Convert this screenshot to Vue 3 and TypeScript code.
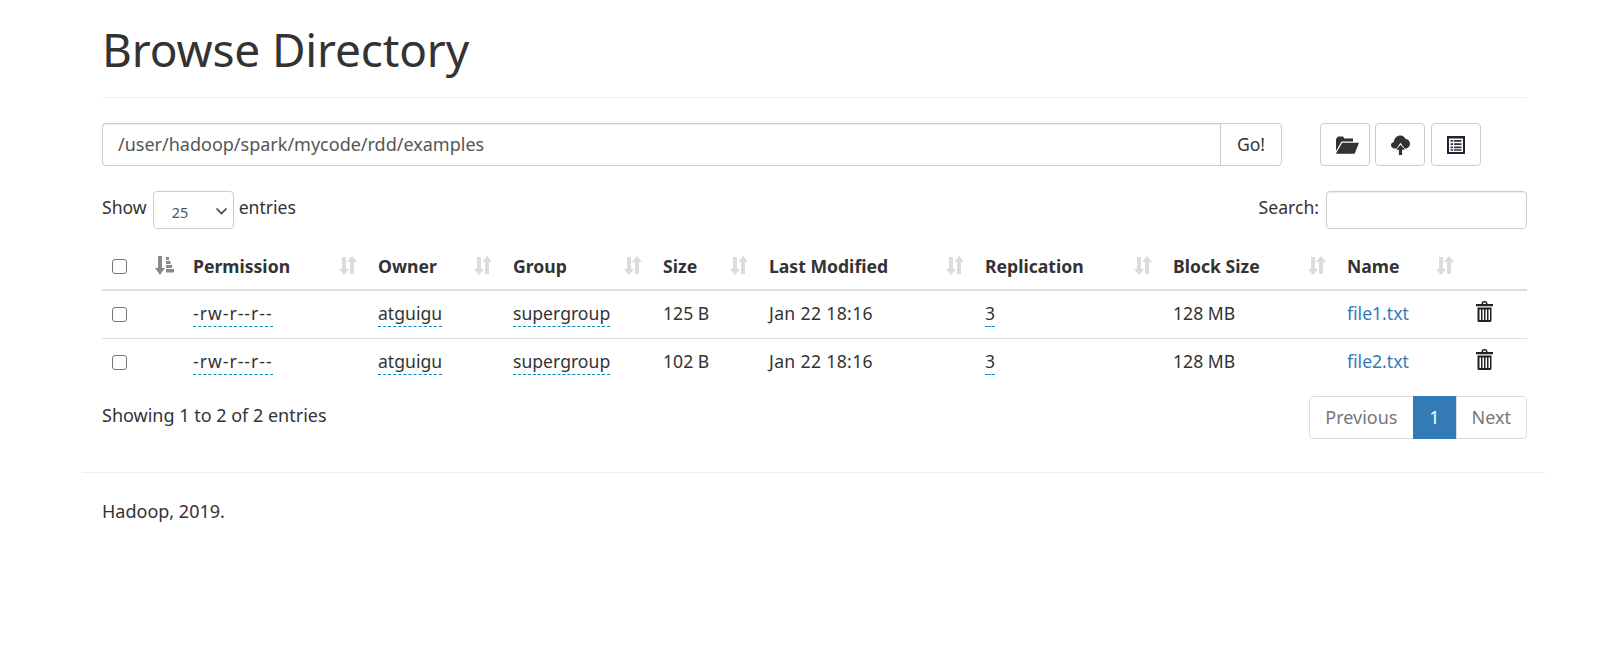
<script setup lang="ts">
interface Row { perm: string; owner: string; group: string; size: string; modified: string; repl: string; block: string; name: string }
const rows: Row[] = [
  { perm: '-rw-r--r--', owner: 'atguigu', group: 'supergroup', size: '125 B', modified: 'Jan 22 18:16', repl: '3', block: '128 MB', name: 'file1.txt' },
  { perm: '-rw-r--r--', owner: 'atguigu', group: 'supergroup', size: '102 B', modified: 'Jan 22 18:16', repl: '3', block: '128 MB', name: 'file2.txt' },
]
const heads = ['Permission', 'Owner', 'Group', 'Size', 'Last Modified', 'Replication', 'Block Size', 'Name']
</script>

<template>
  <div class="page">
    <div class="container">
      <div class="page-header"><h1>Browse Directory</h1></div>
      <div class="toolbar">
        <div class="path-group">
          <input class="path" type="text" value="/user/hadoop/spark/mycode/rdd/examples" />
          <button class="go">Go!</button>
        </div>
        <div class="tools">
          <button class="tool"><svg class="nudge" width="24" height="18" viewBox="0 0 24 18"><path fill="#333" d="M1 15V3l2-2.500h5L9.500 2.500h8.500v3H6.500zM7.200 6.800H24l-4.400 11H.8z"/></svg></button>
          <button class="tool"><svg width="19" height="20" viewBox="0 0 19 20"><path fill="#333" d="M3.800 13.500C1.500 13.500 0 12 0 10.200c0-1.800 1.200-3 2.800-3.300C3.300 3.200 6 .5 9.300.5c2.500 0 4.300 1.400 5 3.300 2.600.2 4.700 2.300 4.700 4.900 0 2.700-2.200 4.800-4.700 4.800h-.8L9.500 7.800l-4 5.700z"/><path fill="#333" d="M9.500 9.800l4.400 5h-2.800V20H7.900v-5.200H5.100z"/></svg></button>
          <button class="tool third"><svg width="18" height="18" viewBox="0 0 18 18"><path fill="#223" fill-rule="evenodd" d="M0 0h18v18H0zM2 2.500v13.500h14V2.500z"/><path fill="#334" d="M3.500 4h2.500v1.800H3.500zM7 4h7.500v1.800H7zM3.500 7.200h2.500V9H3.500zM7 7.200h7.500V9H7zM3.500 10.400h2.500v1.800H3.500zM7 10.400h7.500v1.800H7zM3.500 13.200h2.500v1.500H3.500zM7 13.200h7.500v1.500H7z"/></svg></button>
        </div>
      </div>

      <div class="controls">
        <label class="length">Show
          <span class="select"><span>25</span><svg width="13" height="8" viewBox="0 0 13 8"><path d="M1.500 1.500l5 5 5-5" fill="none" stroke="#444" stroke-width="1.700"/></svg></span>
          entries</label>
        <label class="search">Search: <input type="text" /></label>
      </div>

      <table class="grid">
        <colgroup>
          <col style="width:45px" /><col style="width:38px" /><col style="width:185px" /><col style="width:135px" /><col style="width:150px" /><col style="width:106px" /><col style="width:216px" /><col style="width:188px" /><col style="width:174px" /><col style="width:128px" /><col style="width:60px" />
        </colgroup>
        <thead>
          <tr>
            <th class="c-check"><span class="box"></span></th>
            <th class="c-sort">
              <svg width="19" height="19" viewBox="0 0 19 19"><path fill="#8a8a8a" d="M3 0h4v12h3l-5 7-5-7h3zM11 1h3v3h-3zM11 5h4.500v3H11zM11 9h6v3h-6zM11 13h8v3.500h-8z"/></svg>
            </th>
            <th v-for="h in heads" :key="h">
              <span class="head"><span>{{ h }}</span>
                <svg width="18" height="19" viewBox="0 0 18 19"><path fill="#dcdcdc" d="M3 1h4v12h3l-5 6-5-6h3zM11 18V6H8l5-6 5 6h-3v12z"/></svg>
              </span>
            </th>
            <th></th>
          </tr>
        </thead>
        <tbody>
          <tr v-for="r in rows" :key="r.name">
            <td class="c-check"><span class="box"></span></td>
            <td></td>
            <td><span class="editable wide">{{ r.perm }}</span></td>
            <td><span class="editable">{{ r.owner }}</span></td>
            <td><span class="editable">{{ r.group }}</span></td>
            <td>{{ r.size }}</td>
            <td class="date">{{ r.modified }}</td>
            <td><span class="editable">{{ r.repl }}</span></td>
            <td>{{ r.block }}</td>
            <td><a class="link">{{ r.name }}</a></td>
            <td class="c-trash">
              <svg width="17" height="21" viewBox="0 0 17 21"><path fill="#222" fill-rule="evenodd" d="M5.500 3C5.500 1.200 6.500 0 8 0h1c1.500 0 2.500 1.200 2.500 3H17v2.200H0V3zM7 3h3C10 2 9.500 1.400 9 1.400H8C7.500 1.400 7 2 7 3zM1.500 6.500h14v13c0 .8-.7 1.500-1.500 1.500H3c-.8 0-1.500-.7-1.500-1.500zM3.500 8.500v10.500h1.500V8.500zM6.500 8.500v10.500H8V8.500zM9.500 8.500v10.500H11V8.500zM12.500 8.500v10.500H14V8.500z"/></svg>
            </td>
          </tr>
        </tbody>
      </table>

      <div class="under">
        <div class="info">Showing 1 to 2 of 2 entries</div>
        <div class="pager">
          <span class="pg first">Previous</span><span class="pg active">1</span><span class="pg last">Next</span>
        </div>
      </div>
    </div>
    <div class="footer-rule"></div>
    <div class="footer">Hadoop, 2019.</div>
  </div>
</template>

<style>
html, body { margin: 0; background: #fff; }
</style>

<style scoped>
.page { width: 1463px; margin-left: 82px; font-family: "Noto Sans", "Open Sans", sans-serif; font-size: 17.600px; color: #333; line-height: 1.43; }
.container { padding: 0 18px 0 20px; }
.page-header { height: 98px; box-sizing: border-box; border-bottom: 1px solid #eee; }
h1 { margin: 0; padding-top: 17px; font-size: 46px; font-weight: 400; line-height: 64px; letter-spacing: -0.150px; color: #333; }
.toolbar { display: flex; align-items: stretch; margin-top: 25px; height: 43px; }
.path-group { display: flex; width: 1180px; }
.path { flex: 1; min-width: 0; box-sizing: border-box; border: 1px solid #ccc; border-right: 0; border-radius: 4px 0 0 4px; padding: 0 15px; font: inherit; font-size: 18px; color: #555; outline: 0; box-shadow: inset 0 1px 1px rgba(0,0,0,.075); }
.go { width: 62px; box-sizing: border-box; background: #fff; border: 1px solid #ccc; border-radius: 0 4px 4px 0; font: inherit; color: #333; padding: 0; }
.tools { display: flex; margin-left: 38px; gap: 5px; }
.tool { width: 50px; height: 43px; box-sizing: border-box; display: flex; align-items: center; justify-content: center; background: #fff; border: 1px solid #ccc; border-radius: 4px; padding: 0; }
.third { margin-left: 1px; }
.nudge { margin-left: 3px; }
.controls { display: flex; justify-content: space-between; align-items: flex-start; margin-top: 25px; height: 38px; }
.length { display: flex; align-items: flex-start; gap: 5px; line-height: 32px; }
.select { display: inline-flex; align-items: center; justify-content: space-between; width: 81px; height: 38px; margin-left: 1px; box-sizing: border-box; border: 1px solid #ccc; border-radius: 4px; padding: 4px 5px 0 18px; font-size: 14.500px; color: #555; line-height: 1; }
.select svg { margin-top: -3px; }
.search { display: flex; align-items: flex-start; gap: 7px; line-height: 32px; }
.search input { width: 201px; height: 38px; box-sizing: border-box; border: 1px solid #ccc; border-radius: 4px; box-shadow: inset 0 1px 1px rgba(0,0,0,.075); outline: 0; }
.grid { width: 1425px; margin-top: 15px; table-layout: fixed; border-collapse: collapse; }
th { height: 46px; box-sizing: border-box; padding: 0 8px; border-bottom: 2px solid #ddd; font-weight: 700; text-align: left; }
td { height: 48px; box-sizing: border-box; padding: 0 8px 2px; border-top: 1px solid #ddd; }
tbody tr:first-child td { border-top: 0; }
.head { display: flex; align-items: center; justify-content: space-between; padding-right: 5px; }
.head svg { margin-top: -3px; flex: none; }
.c-check { padding-left: 10px; }
.c-sort { padding-left: 8px; }
.c-sort svg { display: block; margin-top: -3px; }
.box { display: block; width: 15px; height: 15px; box-sizing: border-box; border: 1px solid #767676; border-radius: 3px; margin-top: -1px; }
td .box { margin-top: 2px; }
.editable { border-bottom: 1px dashed #08c; padding-bottom: 1px; }
.wide { letter-spacing: 1px; }
.date { letter-spacing: .35px; }
.link { color: #337ab7; }
.c-trash svg { display: block; margin: -3px 0 0 1px; }
.under { display: flex; justify-content: space-between; margin-top: 10px; }
.info { padding-top: 7px; font-size: 18px; }
.pager { display: flex; height: 43px; font-size: 18px; }
.pg { display: flex; align-items: center; justify-content: center; box-sizing: border-box; height: 43px; padding: 0 15px; border: 1px solid #ddd; margin-left: -1px; color: #777; }
.first { border-radius: 4px 0 0 4px; }
.last { border-radius: 0 4px 4px 0; }
.active { background: #337ab7; border-color: #337ab7; color: #fff; width: 44px; padding: 0; }
.footer-rule { margin-top: 33px; border-top: 1px solid #eee; }
.footer { padding: 26px 20px 0; font-size: 18px; }
</style>
